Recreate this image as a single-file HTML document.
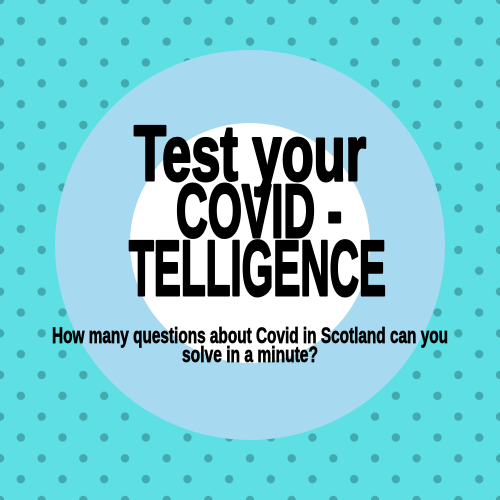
<!DOCTYPE html>
<html><head><meta charset="utf-8"><style>
html,body{margin:0;padding:0;width:500px;height:500px;overflow:hidden;background:#5ddfe4}
svg{display:block}
text{font-family:"Liberation Sans Narrow","Liberation Sans",sans-serif;font-weight:bold;fill:#000;stroke:#000}
</style></head><body>
<svg width="500" height="500" viewBox="0 0 500 500" xmlns="http://www.w3.org/2000/svg">
<defs>
<pattern id="d" x="0" y="0" width="41.667" height="41.667" patternUnits="userSpaceOnUse">
<circle cx="0" cy="0" r="4.2" fill="#42a9ae"/>
<circle cx="41.667" cy="0" r="4.2" fill="#42a9ae"/>
<circle cx="0" cy="41.667" r="4.2" fill="#42a9ae"/>
<circle cx="41.667" cy="41.667" r="4.2" fill="#42a9ae"/>
<circle cx="20.833" cy="20.833" r="4.2" fill="#42a9ae"/>
</pattern>
</defs>
<rect width="500" height="500" fill="#5ddfe4"/>
<rect width="500" height="500" fill="url(#d)"/>
<circle cx="250" cy="245" r="195" fill="#a7daf0"/>
<circle cx="250" cy="243" r="120" fill="#ffffff"/>
<g stroke-width="3" stroke-linejoin="round">
<text x="134" y="180" font-size="78" textLength="232" lengthAdjust="spacingAndGlyphs">Test your</text>
<text x="176" y="237" font-size="75" textLength="166" lengthAdjust="spacingAndGlyphs">COVID -</text>
<text x="129" y="295" font-size="78" textLength="257" lengthAdjust="spacingAndGlyphs">TELLIGENCE</text>
</g>
<g stroke-width="0.7">
<text x="52" y="343" font-size="22" textLength="396" lengthAdjust="spacingAndGlyphs">How many questions about Covid in Scotland can you</text>
<text x="182" y="362" font-size="22" textLength="136" lengthAdjust="spacingAndGlyphs">solve in a minute?</text>
</g>
</svg>
</body></html>
